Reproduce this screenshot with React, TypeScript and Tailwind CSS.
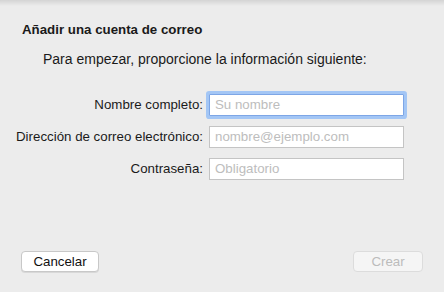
import React from 'react';

const fields = [
  { label: 'Nombre completo:', placeholder: 'Su nombre', focused: true },
  { label: 'Dirección de correo electrónico:', placeholder: 'nombre@ejemplo.com', focused: false },
  { label: 'Contraseña:', placeholder: 'Obligatorio', focused: false },
];

const App: React.FC = () => {
  return (
    <div
      className="w-[444px] h-[292px] bg-[#ececec] flex flex-col text-[13.3px] text-[#1a1a1a] relative overflow-hidden"
      style={{ fontFamily: '"Liberation Sans", Arial, sans-serif' }}
    >
      <div className="absolute top-0 left-0 right-0 h-[6px] bg-gradient-to-b from-[#d4d4d4] to-transparent" />

      <div className="pl-[22px] pt-[22px] font-bold leading-[16px]">Añadir una cuenta de correo</div>
      <div className="pl-[43px] pt-[13px] text-[14px] leading-[17px]">Para empezar, proporcione la información siguiente:</div>

      <div className="grid grid-cols-[203px_195px] gap-x-[6px] gap-y-[10px] mt-[26px] items-center">
        {fields.map((f) => (
          <React.Fragment key={f.label}>
            <div className="text-right leading-[16px] whitespace-nowrap">{f.label}</div>
            <div
              className={`h-[22px] bg-white border px-[5px] flex items-center ${
                f.focused
                  ? 'border-[#7da6e6] shadow-[0_0_0_3px_#a3c6f5] rounded-[1px]'
                  : 'border-[#c4c4c4]'
              }`}
            >
              <span className="text-[#bdbdbd] leading-[16px]">{f.placeholder}</span>
            </div>
          </React.Fragment>
        ))}
      </div>

      <div className="flex justify-between items-center px-[21px] mt-auto mb-[20px]">
        <button className="w-[78px] h-[21px] bg-white border border-[#c8c8c8] rounded-[4px] shadow-[0_1px_0_#d8d8d8] text-[13.3px] leading-[16px] text-[#111]">
          Cancelar
        </button>
        <button className="w-[70px] h-[21px] bg-[#f5f5f5] border border-[#dcdcdc] rounded-[4px] text-[13.3px] leading-[16px] text-[#bcbcbc]">
          Crear
        </button>
      </div>
    </div>
  );
};

export default App;
